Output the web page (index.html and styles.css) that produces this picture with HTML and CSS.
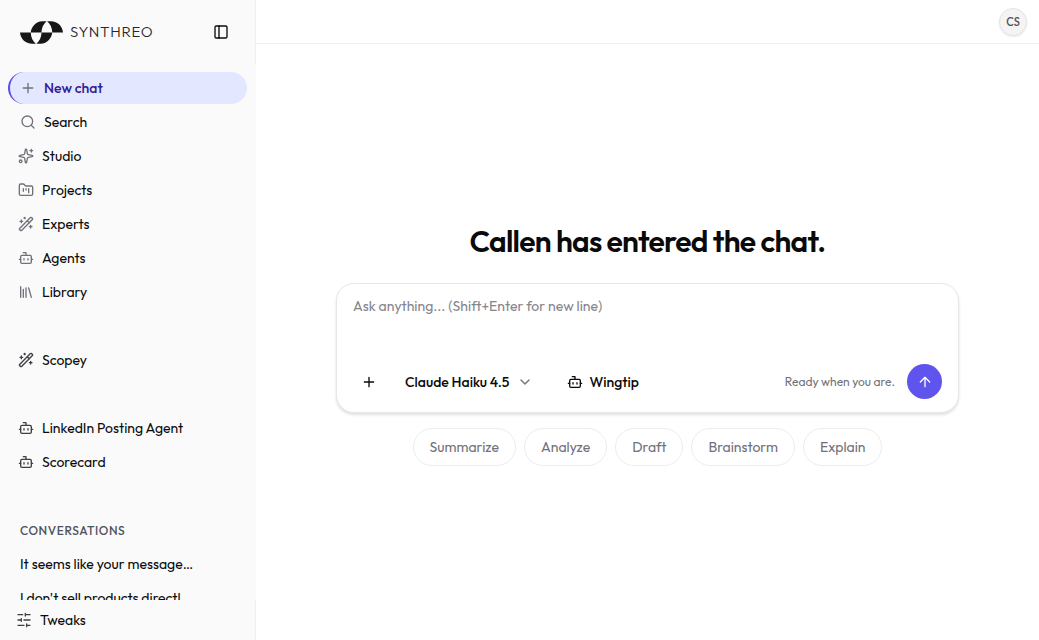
FILE: index.html
```html
<!DOCTYPE html>
<html lang="en">
<head>
    <meta charset="UTF-8" />
    <meta name="viewport" content="width=device-width, initial-scale=1.0" />
    <title>Synthreo</title>
    <link rel="stylesheet" href="styles.css">
</head>
<body>
    <!-- Shared icons -->
    <svg class="sprite" aria-hidden="true">
        <symbol id="icon-plus" viewBox="0 0 24 24"><path d="M5 12h14M12 5v14" /></symbol>
        <symbol id="icon-search" viewBox="0 0 24 24"><circle cx="11" cy="11" r="8" /><path d="m21 21-4.3-4.3" /></symbol>
        <symbol id="icon-sparkles" viewBox="0 0 24 24">
            <path d="M11 2.8a1 1 0 0 1 2 0l1 5.6a2 2 0 0 0 1.6 1.6l5.6 1a1 1 0 0 1 0 2l-5.6 1a2 2 0 0 0-1.6 1.6l-1 5.6a1 1 0 0 1-2 0l-1-5.6A2 2 0 0 0 8.4 14l-5.6-1a1 1 0 0 1 0-2l5.6-1A2 2 0 0 0 10 8.4z" />
            <path d="M20 2v4M22 4h-4" /><circle cx="4" cy="20" r="2" />
        </symbol>
        <symbol id="icon-folder" viewBox="0 0 24 24">
            <path d="M4 20h16a2 2 0 0 0 2-2V8a2 2 0 0 0-2-2h-7.9a2 2 0 0 1-1.7-.9l-.8-1.2A2 2 0 0 0 7.9 3H4a2 2 0 0 0-2 2v13a2 2 0 0 0 2 2Z" />
            <path d="M8 10v4M12 10v2M16 10v6" />
        </symbol>
        <symbol id="icon-wand" viewBox="0 0 24 24">
            <path d="m21.64 3.64-1.28-1.28a1.21 1.21 0 0 0-1.72 0L2.36 18.64a1.21 1.21 0 0 0 0 1.72l1.28 1.28a1.2 1.2 0 0 0 1.72 0L21.64 5.36a1.2 1.2 0 0 0 0-1.72" />
            <path d="m14 7 3 3M5 6v4M19 14v4M10 2v2M7 8H3M21 16h-4M11 3H9" />
        </symbol>
        <symbol id="icon-bot" viewBox="0 0 24 24">
            <path d="M12 8V4H8" /><rect width="16" height="12" x="4" y="8" rx="2" />
            <path d="M2 14h2M20 14h2M15 13v2M9 13v2" />
        </symbol>
        <symbol id="icon-library" viewBox="0 0 24 24"><path d="m16 6 4 14M12 6v14M8 8v12M4 4v16" /></symbol>
        <symbol id="icon-panel" viewBox="0 0 24 24"><rect width="18" height="18" x="3" y="3" rx="2" /><path d="M9 3v18" /></symbol>
        <symbol id="icon-sliders" viewBox="0 0 24 24">
            <path d="M21 4h-7M10 4H3M21 12h-9M8 12H3M21 20h-5M12 20H3M14 2v4M8 10v4M16 18v4" />
        </symbol>
        <symbol id="icon-chevron" viewBox="0 0 24 24"><path d="m6 9 6 6 6-6" /></symbol>
        <symbol id="icon-arrow-up" viewBox="0 0 24 24"><path d="m5 12 7-7 7 7M12 19V5" /></symbol>
    </svg>

    <div class="app">
        <aside class="sidebar">
            <div class="sidebar-header">
                <a class="brand" href="#">
                    <svg class="brand-mark" viewBox="0 0 42 22" aria-hidden="true">
                        <path d="M10.500 11C11 6 15 0 22 0H26C23 2.500 21 6.500 21 11Z" />
                        <path d="M26.500 0H30C37 0 41.500 5 42 11H31.500C31.500 6.500 29.500 2.500 26.500 0Z" />
                        <path d="M0 11H10.500C10.500 15.500 12.500 19.500 15.500 22H12C5 22 .5 17 0 11Z" />
                        <path d="M21 11H31.500C31 16 27 22 20 22H16C19 19.500 21 15.500 21 11Z" />
                        <path class="brand-line" d="M0 11H42" />
                    </svg>
                    <span>SYNTHREO</span>
                </a>
                <button class="icon-btn" type="button" aria-label="Toggle sidebar"><svg class="icon"><use href="#icon-panel" /></svg></button>
            </div>

            <nav class="sidebar-nav">
                <button class="nav-item nav-action active" type="button"><svg class="icon"><use href="#icon-plus" /></svg>New chat</button>
                <button class="nav-item nav-action" type="button"><svg class="icon"><use href="#icon-search" /></svg>Search</button>
                <a class="nav-item" href="#"><svg class="icon"><use href="#icon-sparkles" /></svg>Studio</a>
                <a class="nav-item" href="#"><svg class="icon"><use href="#icon-folder" /></svg>Projects</a>
                <a class="nav-item" href="#"><svg class="icon"><use href="#icon-wand" /></svg>Experts</a>
                <a class="nav-item" href="#"><svg class="icon"><use href="#icon-bot" /></svg>Agents</a>
                <a class="nav-item" href="#"><svg class="icon"><use href="#icon-library" /></svg>Library</a>

                <div class="nav-group">
                    <a class="nav-item" href="#"><svg class="icon"><use href="#icon-wand" /></svg>Scopey</a>
                </div>
                <div class="nav-group">
                    <a class="nav-item" href="#"><svg class="icon"><use href="#icon-bot" /></svg>LinkedIn Posting Agent</a>
                    <a class="nav-item" href="#"><svg class="icon"><use href="#icon-bot" /></svg>Scorecard</a>
                </div>
                <div class="nav-group">
                    <h2 class="nav-heading">CONVERSATIONS</h2>
                    <a class="nav-item conversation" href="#">It seems like your message…</a>
                    <a class="nav-item conversation" href="#">I don't sell products directl</a>
                </div>
            </nav>

            <div class="sidebar-footer">
                <button class="tweaks" type="button"><svg class="icon"><use href="#icon-sliders" /></svg>Tweaks</button>
            </div>
        </aside>

        <div class="main">
            <header class="topbar">
                <button class="avatar" type="button">CS</button>
            </header>
            <main class="welcome">
                <h1>Callen has entered the chat.</h1>
                <form class="composer">
                    <textarea aria-label="Message" placeholder="Ask anything... (Shift+Enter for new line)"></textarea>
                    <div class="composer-bar">
                        <button class="tool add" type="button" aria-label="Add"><svg class="icon"><use href="#icon-plus" /></svg></button>
                        <button class="tool model" type="button">Claude Haiku 4.5<svg class="icon"><use href="#icon-chevron" /></svg></button>
                        <button class="tool agent" type="button"><svg class="icon"><use href="#icon-bot" /></svg>Wingtip</button>
                        <span class="status">Ready when you are.</span>
                        <button class="send" type="submit" aria-label="Send"><svg class="icon"><use href="#icon-arrow-up" /></svg></button>
                    </div>
                </form>
                <div class="suggestions">
                    <button type="button">Summarize</button>
                    <button type="button">Analyze</button>
                    <button type="button">Draft</button>
                    <button type="button">Brainstorm</button>
                    <button type="button">Explain</button>
                </div>
            </main>
        </div>
    </div>
</body>
</html>
```

FILE: styles.css
```css
* {
    box-sizing: border-box;
}

body {
    margin: 0;
    font-family: Outfit, Lato, sans-serif;
    font-size: 14px;
    line-height: 20px;
    color: #0a0a0a;
    background-color: #ffffff;
}

button,
textarea {
    font: inherit;
    color: inherit;
}

button {
    padding: 0;
    border: none;
    background: none;
    cursor: pointer;
}

a {
    color: inherit;
    text-decoration: none;
}

.sprite {
    display: none;
}

.icon {
    width: 16px;
    height: 16px;
    flex-shrink: 0;
    fill: none;
    stroke: currentColor;
    stroke-width: 2;
    stroke-linecap: round;
    stroke-linejoin: round;
}

.app {
    display: flex;
    height: 100vh;
}

/* Sidebar */

.sidebar {
    display: flex;
    flex-direction: column;
    flex-shrink: 0;
    width: 256px;
    background-color: #fafafa;
}

.sidebar-header {
    display: flex;
    align-items: center;
    justify-content: space-between;
    height: 64px;
    padding: 0 20px;
    border-right: 1px solid #f0f0f1;
}

.brand {
    display: flex;
    align-items: center;
    gap: 7px;
    font-size: 15px;
    font-weight: 300;
    letter-spacing: 0.05em;
    color: #27272a;
}

.brand-mark {
    width: 43px;
    height: 23px;
    fill: #171717;
}

.brand-line {
    stroke: #8a8a8a;
    stroke-width: 0.5;
}

.icon-btn {
    display: flex;
    align-items: center;
    justify-content: center;
    width: 28px;
    height: 28px;
}

.sidebar-nav {
    display: flex;
    flex: 1;
    flex-direction: column;
    gap: 2px;
    min-height: 0;
    padding: 8px 9px 0 8px;
    overflow: hidden;
}

.nav-item {
    display: flex;
    align-items: center;
    flex-shrink: 0;
    gap: 8px;
    height: 32px;
    padding: 0 10px;
    border-radius: 16px;
}

.nav-item .icon {
    stroke: #71717a;
}

.nav-action {
    padding: 0 12px;
}

.nav-item.active {
    padding-left: 10px;
    border-left: 2px solid #5b4be7;
    background-color: #e3e7ff;
    font-weight: 500;
    color: #312094;
}

.nav-group {
    display: flex;
    flex-direction: column;
    flex-shrink: 0;
    gap: 2px;
    margin-top: 34px;
}

.nav-group .icon {
    stroke: #3f3f46;
}

.nav-heading {
    margin: 0;
    padding: 7px 12px 5px;
    font-size: 12px;
    font-weight: 500;
    letter-spacing: 0.05em;
    color: #52525b;
}

.conversation {
    padding: 0 12px;
}

.sidebar-footer {
    height: 40px;
    padding: 10px 16px;
    border-right: 1px solid #f0f0f1;
}

.tweaks {
    display: flex;
    align-items: center;
    gap: 8px;
}

.tweaks .icon {
    stroke: #3f3f46;
}

/* Main area */

.main {
    display: flex;
    flex: 1;
    flex-direction: column;
    min-width: 0;
}

.topbar {
    display: flex;
    align-items: center;
    justify-content: flex-end;
    height: 44px;
    padding: 0 12px;
    border-bottom: 1px solid #f0f0f1;
}

.avatar {
    width: 28px;
    height: 28px;
    border: 1px solid #e4e4e7;
    border-radius: 50%;
    background-color: #f4f4f5;
    box-shadow: 0 1px 2px rgba(0, 0, 0, 0.08);
    font-size: 11px;
    font-weight: 500;
    color: #52525b;
}

.welcome {
    display: flex;
    flex: 1;
    flex-direction: column;
    align-items: center;
    justify-content: center;
    padding: 4px 80px 0;
}

h1 {
    margin: 0 0 24px;
    font-size: 30px;
    line-height: 36px;
    font-weight: 600;
    letter-spacing: -0.025em;
}

.composer {
    width: 100%;
    max-width: 768px;
    padding: 12px 16px;
    border: 1px solid #e7e7ea;
    border-radius: 18px;
    background-color: #ffffff;
    box-shadow: 0 2px 3px rgba(0, 0, 0, 0.12);
}

.composer textarea {
    display: block;
    width: 100%;
    height: 68px;
    padding: 0;
    border: none;
    outline: none;
    resize: none;
    background: none;
}

.composer textarea::placeholder {
    color: #85858c;
}

.composer-bar {
    display: flex;
    align-items: center;
}

.tool {
    display: flex;
    align-items: center;
    gap: 8px;
    height: 36px;
    font-weight: 500;
}

.add {
    justify-content: center;
    width: 32px;
}

.model {
    padding: 0 14px 0 20px;
}

.model .icon {
    stroke: #71717a;
}

.agent {
    gap: 6px;
    padding: 0 20px;
}

.status {
    margin-left: auto;
    margin-right: 12px;
    font-size: 12px;
    color: #71717a;
}

.send {
    display: flex;
    align-items: center;
    justify-content: center;
    width: 35px;
    height: 35px;
    border-radius: 50%;
    background-color: #5f55ee;
    color: #ffffff;
}

.suggestions {
    display: flex;
    flex-wrap: wrap;
    justify-content: center;
    gap: 8px;
    margin-top: 15px;
}

.suggestions button {
    height: 38px;
    padding: 0 16px;
    border: 1px solid #ededef;
    border-radius: 19px;
    color: #71717a;
}
```
